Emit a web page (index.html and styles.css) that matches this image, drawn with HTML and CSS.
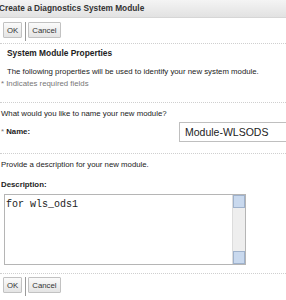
FILE: index.html
```html
<!DOCTYPE html>
<html lang="en">

<head>
    <meta charset="utf-8" />
    <title>Create a Diagnostics System Module</title>
    <link rel="stylesheet" href="styles.css">
</head>

<body>
    <div class="titlebar">Create a Diagnostics System Module</div>

    <div class="toolbar">
        <button class="btn">OK</button>
        <span class="sep"></span>
        <button class="btn">Cancel</button>
    </div>

    <div class="section first">
        <h2>System Module Properties</h2>
        <p class="intro">The following properties will be used to identify your new system module.</p>
        <p class="req">* Indicates required fields</p>
    </div>

    <div class="section">
        <p class="question">What would you like to name your new module?</p>
        <div class="name-row">
            <label for="name"><span class="star">*</span> Name:</label>
            <input type="text" id="name" value="Module-WLSODS">
        </div>
    </div>

    <div class="section">
        <p class="question">Provide a description for your new module.</p>
        <label class="desc-label" for="desc">Description:</label>
        <div class="desc-box">
            <div class="desc-text" id="desc">for wls_ods1</div>
            <div class="scroll">
                <span class="arrow up"></span>
                <span class="track"></span>
                <span class="arrow down"></span>
            </div>
        </div>
    </div>

    <div class="toolbar bottom">
        <button class="btn">OK</button>
        <span class="sep"></span>
        <button class="btn">Cancel</button>
    </div>
</body>

</html>
```

FILE: styles.css
```css
*,
*::before,
*::after {
    margin: 0;
    padding: 0;
    box-sizing: border-box;
}

body {
    width: 286px;
    height: 300px;
    overflow: hidden;
    background: #fff;
    font-family: "Liberation Sans", Arial, sans-serif;
    font-size: 7.8px;
    line-height: 10px;
    color: #222;
}

.titlebar {
    height: 18px;
    padding-top: 3px;
    text-indent: -1px;
    font-weight: bold;
    font-size: 8.3px;
    color: #333;
    background: linear-gradient(#f4f4f4, #e2e2e2);
    border-bottom: 1px solid #d6d6d6;
}

.toolbar {
    display: flex;
    align-items: flex-start;
    gap: 2px;
    height: 26px;
    padding: 4px 0 0 3px;
    border-bottom: 1px dotted #cfcfcf;
}

.btn {
    height: 16px;
    padding: 0 3px;
    font-family: inherit;
    font-size: 7.8px;
    color: #333;
    background: linear-gradient(#fbfbfb, #e4e4e4);
    border: 1px solid #c2c2c2;
    border-radius: 1px;
}

.sep {
    width: 1px;
    height: 19px;
    margin: 0 0 0 1px;
    background: #9a9a9a;
}

.section {
    border-bottom: 1px dotted #cfcfcf;
}

.section h2 {
    font-size: 8.4px;
    font-weight: bold;
    color: #222;
    padding: 4px 0 0 7px;
}

.intro {
    padding: 9px 0 0 7px;
}

.req {
    padding: 2px 0 13px 1px;
    color: #777;
}

.question {
    padding: 6px 0 0 1px;
}

.name-row {
    display: flex;
    align-items: center;
    justify-content: space-between;
    padding: 3px 0 11px 1px;
}

.name-row label {
    font-weight: bold;
}

.star {
    color: #777;
    font-weight: normal;
}

.name-row input {
    width: 108px;
    height: 20px;
    margin-right: -1px;
    padding: 0 5px;
    font-family: inherit;
    font-size: 10.5px;
    color: #222;
    border: 1px solid #bfbfbf;
}

.section:last-of-type .question {
    padding-top: 5px;
}

.desc-label {
    display: block;
    padding: 10px 0 0 1px;
    font-weight: bold;
}

.desc-box {
    display: flex;
    width: 242px;
    height: 71px;
    margin: 4px 0 8px 4px;
    border: 1px solid #b5b5b5;
}

.desc-text {
    flex: 1;
    padding: 4px 1px;
    font-family: "Liberation Mono", "Courier New", monospace;
    font-size: 10px;
    line-height: 12px;
}

.scroll {
    display: flex;
    flex-direction: column;
    width: 13px;
    background: #eeeeee;
    border-left: 1px solid #dcdcdc;
}

.arrow {
    height: 13px;
    background: #c9d9ee;
    border: 1px solid #9fb2cc;
}

.track {
    flex: 1;
}

.toolbar.bottom {
    border-bottom: none;
    padding-top: 3px;
}
```
